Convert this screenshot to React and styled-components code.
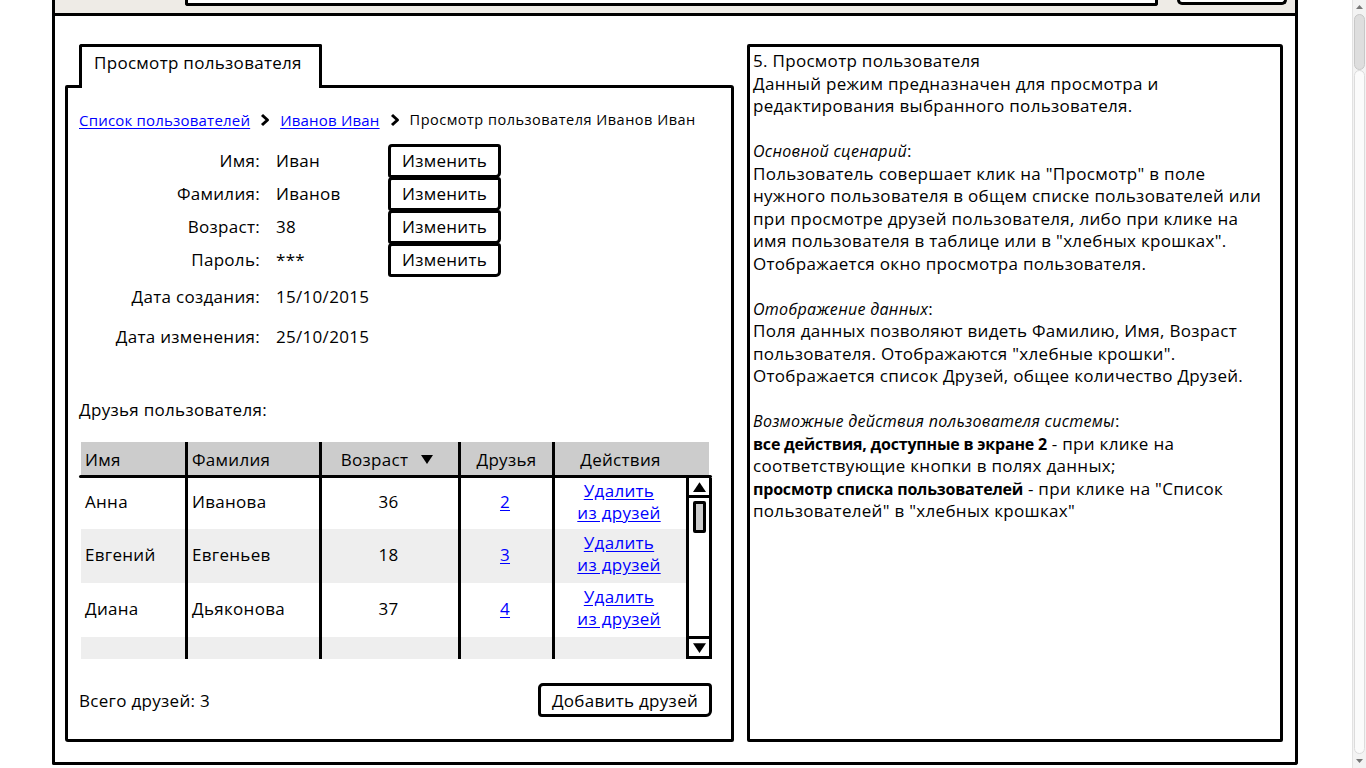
import styled, { createGlobalStyle } from 'styled-components';

const GlobalStyle = createGlobalStyle`
  html, body {
    margin: 0;
    padding: 0;
    background: #fff;
    overflow: hidden;
  }
  body {
    font-family: "Open Sans", "Noto Sans", sans-serif;
    color: #000;
  }
  * { box-sizing: border-box; }
`;

const fields = [
    { label: 'Имя:', value: 'Иван', edit: true, h: 33 },
    { label: 'Фамилия:', value: 'Иванов', edit: true, h: 33 },
    { label: 'Возраст:', value: '38', edit: true, h: 33 },
    { label: 'Пароль:', value: '***', edit: true, h: 33 },
    { label: 'Дата создания:', value: '15/10/2015', h: 41 },
    { label: 'Дата изменения:', value: '25/10/2015', h: 39 },
];

const friends = [
    { name: 'Анна', surname: 'Иванова', age: 36, count: 2, h: 51 },
    { name: 'Евгений', surname: 'Евгеньев', age: 18, count: 3, h: 54 },
    { name: 'Диана', surname: 'Дьяконова', age: 37, count: 4, h: 54 },
];

function Chevron() {
    return (
        <svg width="10" height="14" viewBox="0 0 10 14">
            <path d="M2 2 L7.5 7 L2 12" fill="none" stroke="#000" strokeWidth="3" strokeLinejoin="round" />
        </svg>
    );
}

function Triangle({ up, w = 12, h = 9 }) {
    return (
        <svg width={w} height={h} viewBox="0 0 12 9">
            {up ? <path d="M0 9 L6 0 L12 9 Z" fill="#000" /> : <path d="M0 0 L12 0 L6 9 Z" fill="#000" />}
        </svg>
    );
}

function BrowserArrow({ up }) {
    return (
        <svg width="7" height="4" viewBox="0 0 7 4">
            {up ? <path d="M0 4 L3.5 0 L7 4 Z" fill="#777" /> : <path d="M0 0 L7 0 L3.5 4 Z" fill="#777" />}
        </svg>
    );
}

export default function App() {
    return (
        <Page>
            <GlobalStyle />
            <Main>
                <Frame>
                    <TopBar>
                        <AddressBox />
                        <TopButton />
                    </TopBar>

                    <Body>
                        <LeftColumn>
                            <Tab>Просмотр пользователя</Tab>
                            <Panel>
                                <Breadcrumbs>
                                    <Link href="#">Список пользователей</Link>
                                    <Chevron />
                                    <Link href="#">Иванов Иван</Link>
                                    <Chevron />
                                    <Crumb>Просмотр пользователя Иванов Иван</Crumb>
                                </Breadcrumbs>

                                <Fields>
                                    {fields.map(f => (
                                        <FieldRow key={f.label} h={f.h}>
                                            <FieldLabel>{f.label}</FieldLabel>
                                            <FieldValue>{f.value}</FieldValue>
                                            {f.edit && <EditButton>Изменить</EditButton>}
                                        </FieldRow>
                                    ))}
                                </Fields>

                                <SectionTitle>Друзья пользователя:</SectionTitle>

                                <Table>
                                    <HeadRow>
                                        <HeadCell>Имя</HeadCell>
                                        <HeadCell sep>Фамилия</HeadCell>
                                        <HeadCell sep center shift>Возраст <Triangle /></HeadCell>
                                        <HeadCell sep center>Друзья</HeadCell>
                                        <HeadCell sep center>Действия</HeadCell>
                                        <HeadCell />
                                    </HeadRow>
                                    <HeadLine />
                                    <TableBody>
                                        <Rows>
                                            {friends.map((f, i) => (
                                                <Row key={f.name} alt={i % 2 === 1} h={f.h}>
                                                    <Cell>{f.name}</Cell>
                                                    <Cell sep>{f.surname}</Cell>
                                                    <Cell sep center>{f.age}</Cell>
                                                    <Cell sep center><Link href="#">{f.count}</Link></Cell>
                                                    <Cell sep center>
                                                        <ActionLink href="#">Удалить<br />из друзей</ActionLink>
                                                    </Cell>
                                                </Row>
                                            ))}
                                            <Row alt h={22}>
                                                <Cell />
                                                <Cell sep />
                                                <Cell sep />
                                                <Cell sep />
                                                <Cell sep />
                                            </Row>
                                        </Rows>
                                        <ScrollBar>
                                            <ScrollArrow up><Triangle up w={13} h={10} /></ScrollArrow>
                                            <ScrollThumb />
                                            <ScrollArrow><Triangle w={13} h={10} /></ScrollArrow>
                                        </ScrollBar>
                                    </TableBody>
                                </Table>

                                <Footer>
                                    <span>Всего друзей: 3</span>
                                    <AddButton>Добавить друзей</AddButton>
                                </Footer>
                            </Panel>
                        </LeftColumn>

                        <NotesPanel>
                            <Line>5. Просмотр пользователя</Line>
                            <Line>Данный режим предназначен для просмотра и</Line>
                            <Line>редактирования выбранного пользователя.</Line>
                            <Line />
                            <Line><em>Основной сценарий</em>:</Line>
                            <Line>Пользователь совершает клик на "Просмотр" в поле</Line>
                            <Line>нужного пользователя в общем списке пользователей или</Line>
                            <Line>при просмотре друзей пользователя, либо при клике на</Line>
                            <Line>имя пользователя в таблице или в "хлебных крошках".</Line>
                            <Line>Отображается окно просмотра пользователя.</Line>
                            <Line />
                            <Line><em>Отображение данных</em>:</Line>
                            <Line>Поля данных позволяют видеть Фамилию, Имя, Возраст</Line>
                            <Line>пользователя. Отображаются "хлебные крошки".</Line>
                            <Line>Отображается список Друзей, общее количество Друзей.</Line>
                            <Line />
                            <Line><em>Возможные действия пользователя системы</em>:</Line>
                            <Line><b>все действия, доступные в экране 2</b> - при клике на</Line>
                            <Line>соответствующие кнопки в полях данных;</Line>
                            <Line><b>просмотр списка пользователей</b> - при клике на "Список</Line>
                            <Line>пользователей" в "хлебных крошках"</Line>
                        </NotesPanel>
                    </Body>
                </Frame>
            </Main>

            <BrowserScroll>
                <BrowserButton><BrowserArrow up /></BrowserButton>
                <BrowserThumb />
                <BrowserTrack />
                <BrowserButton><BrowserArrow /></BrowserButton>
            </BrowserScroll>
        </Page>
    );
}

const Page = styled.div`
    display: flex;
    width: 1366px;
    height: 768px;
    overflow: hidden;
`

const Main = styled.div`
    flex: 1;
    padding: 0 54px 0 52px;
`

const Frame = styled.div`
    height: 765px;
    border: 3px solid #000;
    border-top: none;
    border-radius: 0 0 3px 2px;
    display: flex;
    flex-direction: column;
`

const TopBar = styled.div`
    height: 16px;
    flex-shrink: 0;
    background-color: #eeebe6;
    border-bottom: 3px solid #000;
    display: flex;
    align-items: flex-start;
`

const AddressBox = styled.div`
    margin-left: 130px;
    width: 973px;
    height: 6px;
    background: #fff;
    border: 3px solid #000;
    border-top: none;
    border-radius: 0 0 3px 3px;
`

const TopButton = styled.div`
    margin-left: 19px;
    width: 110px;
    height: 5px;
    background: #fff;
    border: 3px solid #000;
    border-top: none;
    border-radius: 0 0 9px 9px;
`

const Body = styled.div`
    display: flex;
    gap: 13px;
    padding: 28px 12px 0 10px;
`

const LeftColumn = styled.div`
    width: 669px;
    display: flex;
    flex-direction: column;
`

const Tab = styled.div`
    position: relative;
    z-index: 1;
    margin-left: 14px;
    margin-bottom: -3px;
    width: 243px;
    height: 44px;
    padding: 6px 0 0 12px;
    background: #fff;
    border: 3px solid #000;
    border-bottom: none;
    border-radius: 3px 2px 0 0;
    font-size: 17px;
    letter-spacing: 0.3px;
    line-height: 20px;
    white-space: nowrap;
`

const Panel = styled.div`
    height: 657px;
    border: 3px solid #000;
    border-radius: 2px 3px 2px 3px;
    padding: 22px 11px 0 11px;
    font-size: 17px;
    letter-spacing: 0.3px;
`

const Breadcrumbs = styled.div`
    display: flex;
    align-items: center;
    gap: 10px;
    height: 20px;
    font-size: 15px;
    letter-spacing: 0.2px;
    line-height: 20px;
    white-space: nowrap;
`

const Link = styled.a`
    color: #0000ff;
    text-decoration: underline;
    text-underline-offset: 2px;
`

const Crumb = styled.span`
    font-size: 14.5px;
    letter-spacing: 0.5px;
`

const Fields = styled.div`
    margin-top: 14px;
    display: flex;
    flex-direction: column;
`

const FieldRow = styled.div`
    display: flex;
    align-items: center;
    height: ${props => props.h}px;
`

const FieldLabel = styled.div`
    width: 197px;
    padding-right: 16px;
    text-align: right;
    white-space: nowrap;
`

const FieldValue = styled.div`
    width: 112px;
`

const EditButton = styled.button`
    width: 113px;
    height: 34px;
    margin: -1px 0;
    background: #fff;
    border: 3px solid #000;
    border-radius: 4px 3px 5px 3px;
    font-family: inherit;
    font-size: 17px;
    letter-spacing: 0.3px;
    color: #000;
    padding: 0;
`

const SectionTitle = styled.div`
    margin-top: 44px;
    line-height: 20px;
`

const Table = styled.div`
    margin-top: 22px;
    width: 633px;
`

const HeadRow = styled.div`
    margin: 0 3px 0 2px;
    height: 33px;
    background-color: #cccccc;
    display: grid;
    grid-template-columns: 104px 134px 139px 94px 134px 1fr;
`

const HeadCell = styled.div`
    display: flex;
    align-items: center;
    justify-content: ${props => props.center ? 'center' : 'flex-start'};
    gap: 13px;
    padding-left: ${props => props.center ? '0' : '4px'};
    padding-right: ${props => props.shift ? '6px' : '0'};
    border-left: ${props => props.sep ? '3px solid #000' : 'none'};
    padding-top: 1px;
    white-space: nowrap;
`

const HeadLine = styled.div`
    height: 3px;
    background: #000;
    border-radius: 2px;
`

const TableBody = styled.div`
    display: flex;
    margin-left: 2px;
    height: 181px;
`

const Rows = styled.div`
    width: 605px;
    display: flex;
    flex-direction: column;
`

const Row = styled.div`
    height: ${props => props.h}px;
    flex-shrink: 0;
    background-color: ${props => props.alt ? '#eeeeee' : '#fff'};
    display: grid;
    grid-template-columns: 104px 134px 139px 94px 134px;
`

const Cell = styled.div`
    display: flex;
    align-items: center;
    justify-content: ${props => props.center ? 'center' : 'flex-start'};
    padding-left: ${props => props.center ? '0' : '4px'};
    padding-right: ${props => props.center ? '3px' : '0'};
    padding-bottom: 4px;
    border-left: ${props => props.sep ? '3px solid #000' : 'none'};
    text-align: center;
    white-space: nowrap;
`

const ActionLink = styled(Link)`
    line-height: 22px;
`

const ScrollBar = styled.div`
    width: 26px;
    border: 3px solid #000;
    border-top: none;
    display: flex;
    flex-direction: column;
    justify-content: space-between;
    align-items: center;
    background: #fff;
`

const ScrollArrow = styled.div`
    width: 100%;
    height: 20px;
    display: flex;
    align-items: center;
    justify-content: center;
    border-bottom: ${props => props.up ? '3px solid #000' : 'none'};
    border-top: ${props => props.up ? 'none' : '3px solid #000'};
`

const ScrollThumb = styled.div`
    width: 13px;
    height: 32px;
    margin-bottom: auto;
    margin-top: 3px;
    background: #cccccc;
    border: 3px solid #000;
    border-radius: 2px;
`

const Footer = styled.div`
    margin-top: 24px;
    width: 633px;
    display: flex;
    align-items: center;
    justify-content: space-between;
`

const AddButton = styled.button`
    width: 174px;
    height: 34px;
    background: #fff;
    border: 3px solid #000;
    border-radius: 5px 4px 6px 4px;
    font-family: inherit;
    font-size: 17px;
    letter-spacing: 0.3px;
    color: #000;
    padding: 0;
`

const NotesPanel = styled.div`
    flex: 1;
    height: 698px;
    border: 3px solid #000;
    border-radius: 2px 3px 2px 2px;
    padding: 3px 0 0 3px;
    font-size: 17px;
    letter-spacing: 0.3px;
    line-height: 22.5px;

    em {
        font-size: 16px;
        letter-spacing: 0.3px;
    }

    b {
        font-size: 16px;
        letter-spacing: -0.2px;
    }
`

const Line = styled.div`
    height: 22.5px;
    white-space: nowrap;
`

const BrowserScroll = styled.div`
    width: 14px;
    height: 768px;
    display: flex;
    flex-direction: column;
    background: #f3f3f3;
    border-left: 1px solid #e2e2e2;
`

const BrowserButton = styled.div`
    height: 14px;
    display: flex;
    align-items: center;
    justify-content: center;
`

const BrowserThumb = styled.div`
    height: 56px;
    margin: 0 1px;
    background: #dedede;
    border: 1px solid #c8c8c8;
    border-radius: 6px;
`

const BrowserTrack = styled.div`
    flex: 1;
    margin: 0 1px;
    background: #fbfbfb;
    border: 1px solid #dcdcdc;
    border-radius: 6px;
`
